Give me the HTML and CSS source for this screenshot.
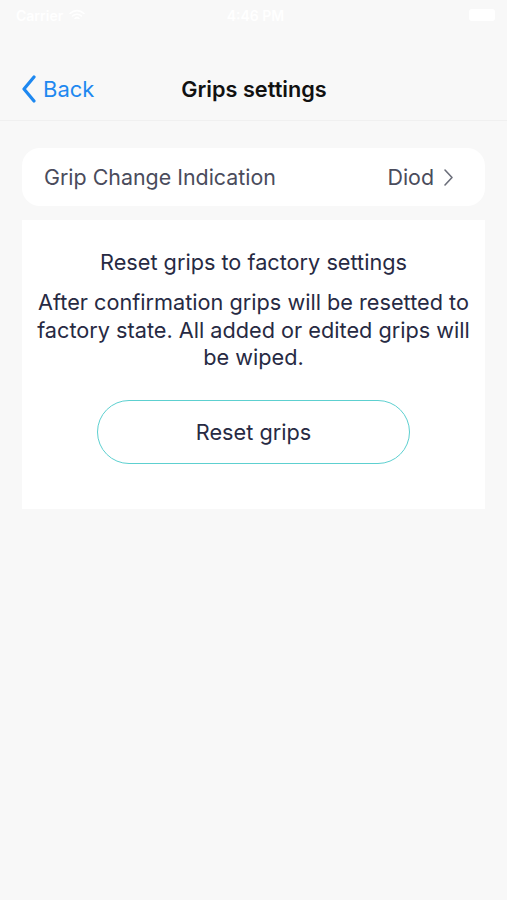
FILE: index.html
```html
<!DOCTYPE html>
<html>
<head>
<meta charset="utf-8">
<link rel="stylesheet" href="styles.css">
</head>
<body>
<div class="screen">
  <div class="statusbar">
    <div class="sb-left"><span>Carrier</span>
      <svg class="wifi" width="16" height="12" viewBox="0 0 16 12"><path d="M1 4.5a10 10 0 0 1 14 0M3.5 7a6.5 6.5 0 0 1 9 0M6 9.5a3 3 0 0 1 4 0" fill="none" stroke="#fff" stroke-width="1.6" stroke-linecap="round"/></svg>
    </div>
    <div class="sb-time">4:46 PM</div>
    <div class="sb-right"><span class="battery"></span></div>
  </div>
  <div class="navbar">
    <div class="back">
      <svg width="16" height="28" viewBox="0 0 16 28"><path d="M13 2 L3 14 L13 26" fill="none" stroke="#1e88f0" stroke-width="3.2" stroke-linecap="round" stroke-linejoin="round"/></svg>
      <span>Back</span>
    </div>
    <div class="title">Grips settings</div>
    <div></div>
  </div>
  <div class="content">
    <div class="row-card">
      <span class="row-label">Grip Change Indication</span>
      <span class="row-value">Diod
        <svg width="11" height="19" viewBox="0 0 11 19"><path d="M2 2 L9 9.5 L2 17" fill="none" stroke="#6b6e7a" stroke-width="1.6" stroke-linecap="round" stroke-linejoin="round"/></svg>
      </span>
    </div>
    <div class="reset-card">
      <div class="reset-title">Reset grips to factory settings</div>
      <div class="reset-text">After confirmation grips will be resetted to factory state. All added or edited grips will be wiped.</div>
      <button class="reset-btn">Reset grips</button>
    </div>
  </div>
</div>
</body>
</html>
```
FILE: styles.css
```css
* { box-sizing: border-box; }
html, body { margin: 0; padding: 0; }
body {
  background: #f8f8f8;
  font-family: Inter, "Noto Sans", sans-serif;
  width: 507px;
  height: 900px;
  overflow: hidden;
}
.screen { display: flex; flex-direction: column; }
.statusbar {
  height: 30px;
  display: flex;
  align-items: center;
  justify-content: space-between;
  padding: 0 12px 0 16px;
  color: #fff;
  font-size: 14px;
  font-weight: 600;
}
.sb-left { display: flex; align-items: center; gap: 6px; width: 120px; }
.sb-right { width: 120px; display: flex; justify-content: flex-end; }
.battery { width: 26px; height: 12px; border-radius: 3px; background: #fff; }
.navbar {
  height: 91px;
  display: grid;
  grid-template-columns: 1fr auto 1fr;
  align-items: center;
  padding: 44px 0 17px 21px;
  border-bottom: 1px solid #f0f0f0;
}
.back {
  display: flex;
  align-items: center;
  gap: 6px;
  color: #1e88f0;
  font-size: 22px;
  line-height: 30px;
}
.title {
  font-size: 21.7px;
  font-weight: 600;
  color: #111;
  line-height: 30px;
  transform: translateX(-10px);
}
.content {
  padding: 27px 22px 0;
  display: flex;
  flex-direction: column;
  gap: 14px;
}
.row-card {
  background: #fff;
  border-radius: 18px;
  height: 58px;
  display: flex;
  align-items: center;
  justify-content: space-between;
  padding: 0 31px 0 22px;
  color: #4a4c5c;
  font-size: 21.4px;
}
.row-value { display: flex; align-items: center; gap: 9px; }
.reset-card {
  background: #fff;
  height: 289px;
  display: flex;
  flex-direction: column;
  align-items: center;
  padding: 27px 8px 0;
  color: #272a43;
  text-align: center;
}
.reset-title { font-size: 21.7px; line-height: 30px; }
.reset-text { font-size: 21.7px; line-height: 27.5px; margin-top: 12px; }
.reset-btn {
  margin-top: 28px;
  width: 313px;
  height: 64px;
  border: 1.5px solid #5dd0d0;
  border-radius: 32px;
  background: #fff;
  font-family: inherit;
  font-size: 21.7px;
  color: #272a43;
}
```
